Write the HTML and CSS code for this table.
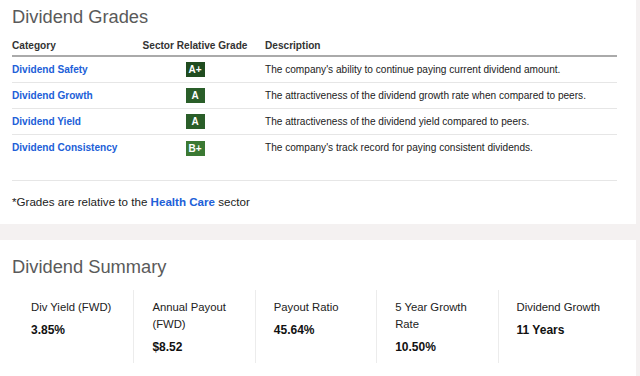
FILE: index.html
```html
<!DOCTYPE html>
<html>
<head>
<meta charset="utf-8">
<link rel="stylesheet" href="styles.css">
</head>
<body>
<div class="page">
  <section class="card grades">
    <h2 class="title">Dividend Grades</h2>
    <table class="grade-table">
      <thead>
        <tr>
          <th class="col-cat">Category</th>
          <th class="col-grade">Sector Relative Grade</th>
          <th class="col-desc">Description</th>
        </tr>
      </thead>
      <tbody>
        <tr>
          <td class="col-cat"><a class="link">Dividend Safety</a></td>
          <td class="col-grade"><span class="badge badge-aplus">A+</span></td>
          <td class="col-desc">The company's ability to continue paying current dividend amount.</td>
        </tr>
        <tr>
          <td class="col-cat"><a class="link">Dividend Growth</a></td>
          <td class="col-grade"><span class="badge badge-a">A</span></td>
          <td class="col-desc">The attractiveness of the dividend growth rate when compared to peers.</td>
        </tr>
        <tr>
          <td class="col-cat"><a class="link">Dividend Yield</a></td>
          <td class="col-grade"><span class="badge badge-a">A</span></td>
          <td class="col-desc">The attractiveness of the dividend yield compared to peers.</td>
        </tr>
        <tr class="last">
          <td class="col-cat"><a class="link">Dividend Consistency</a></td>
          <td class="col-grade"><span class="badge badge-bplus">B+</span></td>
          <td class="col-desc">The company's track record for paying consistent dividends.</td>
        </tr>
      </tbody>
    </table>
    <p class="note">*Grades are relative to the <a class="link-plain">Health Care</a> sector</p>
  </section>
  <section class="card summary">
    <h2 class="title">Dividend Summary</h2>
    <div class="stats">
      <div class="stat">
        <div class="stat-label">Div Yield (FWD)</div>
        <div class="stat-value">3.85%</div>
      </div>
      <div class="stat">
        <div class="stat-label">Annual Payout (FWD)</div>
        <div class="stat-value">$8.52</div>
      </div>
      <div class="stat">
        <div class="stat-label">Payout Ratio</div>
        <div class="stat-value">45.64%</div>
      </div>
      <div class="stat">
        <div class="stat-label">5 Year Growth Rate</div>
        <div class="stat-value">10.50%</div>
      </div>
      <div class="stat">
        <div class="stat-label">Dividend Growth</div>
        <div class="stat-value">11 Years</div>
      </div>
    </div>
  </section>
</div>
</body>
</html>
```

FILE: styles.css
```css
html, body {
  margin: 0;
  padding: 0;
}
body {
  background: #f4f1f1;
  font-family: "Liberation Sans", Arial, sans-serif;
  color: #222;
  width: 640px;
  height: 376px;
  overflow: hidden;
}
.page {
  display: flex;
  flex-direction: column;
  gap: 16px;
  width: 636px;
}
.card {
  background: #fff;
  padding: 0 12px;
}
.grades {
  height: 224px;
  padding-top: 5px;
  box-sizing: border-box;
}
.title {
  margin: 0;
  font-size: 18.3px;
  line-height: 24px;
  font-weight: 400;
  color: #5a5a5a;
}
.grade-table {
  width: 605px;
  table-layout: fixed;
  border-collapse: collapse;
  margin-top: 8px;
  font-size: 10.1px;
}
.grade-table th {
  text-align: left;
  font-weight: 700;
  color: #333;
  height: 16px;
  padding: 1px 0 1px 0;
  border-bottom: 2px solid #aaa;
  line-height: 16px;
}
.grade-table th.col-grade {
  text-align: center;
}
.col-cat { width: 113px; }
.col-grade { width: 140px; text-align: center; }
.grade-table td {
  height: 25px;
  padding: 0;
  border-bottom: 1px solid #e6e6e6;
  line-height: 16px;
  vertical-align: middle;
  white-space: nowrap;
}
.grade-table tr.last td {
  height: 25px;
  vertical-align: top;
  padding-top: 5px;
  padding-bottom: 15px;
}
.link {
  color: #2160d8;
  font-weight: 700;
  text-decoration: none;
}
.link-plain {
  color: #2160d8;
  font-weight: 700;
  text-decoration: none;
}
.badge {
  display: inline-block;
  width: 19px;
  height: 15px;
  line-height: 15px;
  font-size: 10px;
  font-weight: 700;
  color: #fff;
  text-align: center;
  vertical-align: middle;
}
.badge-aplus { background: #204c1f; }
.badge-a { background: #2a5e29; }
.badge-bplus { background: #3b7933; }
.note {
  margin: 12px 0 0 0;
  font-size: 11.6px;
  line-height: 18px;
  color: #222;
}
.summary {
  height: 136px;
  padding-top: 15px;
  box-sizing: border-box;
}
.stats {
  display: grid;
  grid-template-columns: repeat(5, 121.4px);
  margin-top: 11px;
}
.stat {
  padding: 9px 14px 0 19px;
  height: 73px;
  box-sizing: border-box;
}
.stat + .stat {
  border-left: 1px solid #ececec;
  padding-left: 18px;
}
.stat-label {
  font-size: 11.3px;
  line-height: 17px;
  color: #222;
}
.stat-value {
  margin-top: 6px;
  font-size: 12px;
  line-height: 17px;
  font-weight: 700;
  color: #111;
}
```
